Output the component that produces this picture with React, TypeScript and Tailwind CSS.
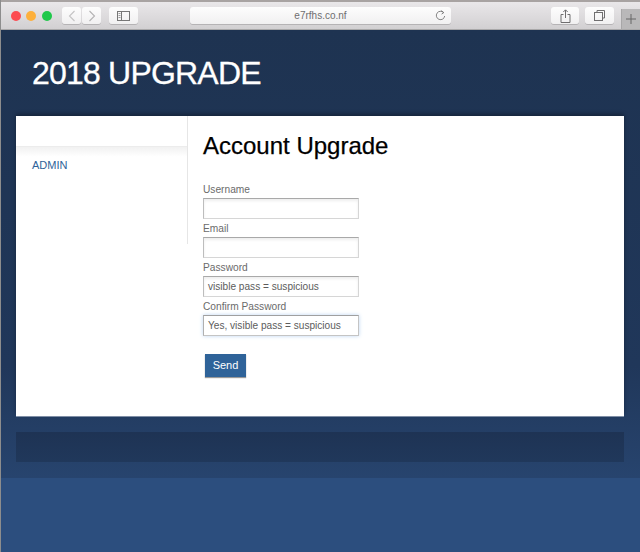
const font = "[font-family:'Liberation_Sans',Arial,sans-serif]";

const fields = [
  { label: "Username", value: "" },
  { label: "Email", value: "" },
  { label: "Password", value: "visible pass = suspicious" },
  { label: "Confirm Password", value: "Yes, visible pass = suspicious", focused: true },
];

function ToolButton({ className, children }: { className: string; children?: React.ReactNode }) {
  return (
    <div className={`h-[17px] flex items-center justify-center rounded-[3px] bg-gradient-to-b from-[#fdfdfd] to-[#f1f0f1] shadow-[0_1px_0_#b5b3b5] ${className}`}>
      {children}
    </div>
  );
}

function Toolbar() {
  return (
    <div className="h-[30px] shrink-0 flex flex-col border-b border-[#a9a8a9] bg-gradient-to-b from-[#ebe9eb] to-[#d2d0d2]">
      <div className="h-[2px] bg-[#a8a3a2]" />
      <div className="flex-1 flex items-start pt-[5px] pl-[9.500px] relative">
        <div className="flex gap-[5.500px] mt-[4px]">
          <span className="w-[10px] h-[10px] rounded-full bg-[#fc4b50]" />
          <span className="w-[10px] h-[10px] rounded-full bg-[#fdb03c]" />
          <span className="w-[10px] h-[10px] rounded-full bg-[#1fc84a]" />
        </div>
        <ToolButton className="w-[19px] ml-[10.500px]">
          <svg width="8" height="12" viewBox="0 0 8 12" fill="none" stroke="#c4c3c4" strokeWidth="1.1"><path d="M6.500 1 1.500 6l5 5" /></svg>
        </ToolButton>
        <ToolButton className="w-[19px] ml-px">
          <svg width="8" height="12" viewBox="0 0 8 12" fill="none" stroke="#b4b3b4" strokeWidth="1.1"><path d="M1.500 1l5 5-5 5" /></svg>
        </ToolButton>
        <ToolButton className="w-[29px] ml-[8px]">
          <svg width="13" height="10" viewBox="0 0 13 10" fill="none" stroke="#777" strokeWidth="1"><rect x=".5" y=".5" width="12" height="9" /><path d="M4.500 .5v9" /><path d="M1.500 2.500h2M1.500 4.500h2M1.500 6.500h2" strokeWidth=".7" /></svg>
        </ToolButton>
        <ToolButton className={`w-[261px] ml-[52px] relative text-[10px] text-[#6f6e6f] ${font}`}>
          e7rfhs.co.nf
          <svg className="absolute right-[5px] top-[3px]" width="11" height="11" viewBox="0 0 11 11" fill="none" stroke="#777" strokeWidth=".9"><path d="M8.600 2.600A4.200 4.200 0 1 0 9.700 6" /><path d="M6.300 .6l2.500 2-2.200 1.500" /></svg>
        </ToolButton>
        <ToolButton className="w-[28px] ml-[100px]">
          <svg width="11" height="14" viewBox="0 0 11 14" fill="none" stroke="#6f6e6f" strokeWidth="1"><path d="M3.500 5.500H1v8h9v-8H7.500M5.500 9V1M3.300 3l2.200-2.200L7.700 3" /></svg>
        </ToolButton>
        <ToolButton className="w-[29px] ml-[6px]">
          <svg width="11" height="11" viewBox="0 0 11 11" fill="none" stroke="#6f6e6f" strokeWidth="1"><path d="M3 2.500V.5h7.500V8H8.500" /><rect x=".5" y="2.500" width="8" height="8" /></svg>
        </ToolButton>
        <div className="w-[19px] h-[20px] ml-[7px] self-end bg-[#b9b8b9] border-l border-[#a8a7a8] flex items-center justify-center">
          <svg width="10" height="10" viewBox="0 0 10 10" stroke="#666" strokeWidth="1"><path d="M5 0v10M0 5h10" /></svg>
        </div>
      </div>
    </div>
  );
}

function Sidebar() {
  return (
    <div className="w-[172px] h-[128px] shrink-0 border-r border-[#e6e6e6]">
      <div className="h-[31px] border-b border-[#ececec]" />
      <div className="h-[32px] pl-[16px] pt-[10px] bg-gradient-to-b from-[#f1f1f1] via-white via-30% to-white">
        <a className="block text-[11px] leading-[16px] text-[#2f6399]">ADMIN</a>
      </div>
    </div>
  );
}

function Field({ label, value, focused }: { label: string; value: string; focused?: boolean }) {
  return (
    <div className="flex flex-col">
      <label className="h-[18px] text-[10.200px] leading-[20px] text-[#6b6b6b]">{label}</label>
      <div
        className={`w-[156px] h-[21px] flex items-center pl-[4px] text-[10.100px] text-[#5c5c5c] border ${
          focused
            ? "border-[#c4c4c4] border-t-[#a0a0a0] border-l-[#b0b0b0] shadow-[0_0_4px_#bcd6f2]"
            : "border-[#d6d6d6] border-t-[#a9a9a9] border-l-[#bdbdbd] shadow-[inset_0_2px_3px_rgba(0,0,0,0.07)]"
        }`}
      >
        {value}
      </div>
    </div>
  );
}

export default function App() {
  return (
    <div className={`w-[640px] h-[552px] flex flex-col overflow-hidden border-l border-[#8d8d8d] ${font}`}>
      <Toolbar />
      <div className="flex-1 flex flex-col bg-[#2c4e7e]">
        <div className="h-[448px] shrink-0 flex flex-col bg-gradient-to-b from-[#1e3351] via-[#20375a] via-75% to-[#27446e]">
          <header className="h-[86px] shrink-0 pl-[31px] pt-[24px]">
            <h1 className="text-[32px] leading-[38px] tracking-[-0.8px] text-white [-webkit-text-stroke:0.3px_white]">2018 UPGRADE</h1>
          </header>
          <main className="h-[300px] shrink-0 ml-[15px] mr-[16px] flex bg-white shadow-[0_-2px_4px_rgba(0,0,0,0.3),0_1px_0_#8494ad]">
            <Sidebar />
            <div className="flex-1 pl-[15px] pt-[15px]">
              <h2 className="text-[24px] leading-[30px] text-black [-webkit-text-stroke:0.25px_black]">Account Upgrade</h2>
              <form className="mt-[19px] flex flex-col">
                {fields.map((f) => (
                  <Field key={f.label} label={f.label} value={f.value} focused={f.focused} />
                ))}
                <button
                  type="button"
                  className="mt-[18px] ml-[2px] w-[41px] h-[23px] bg-[#2f6399] text-[11px] text-white shadow-[0_1px_1px_rgba(0,0,0,0.4)]"
                >
                  Send
                </button>
              </form>
            </div>
          </main>
          <div className="mt-[16px] ml-[15px] mr-[16px] h-[30px] shrink-0 bg-gradient-to-b from-[#1e3354] to-[#20385b]" />
        </div>
      </div>
    </div>
  );
}
